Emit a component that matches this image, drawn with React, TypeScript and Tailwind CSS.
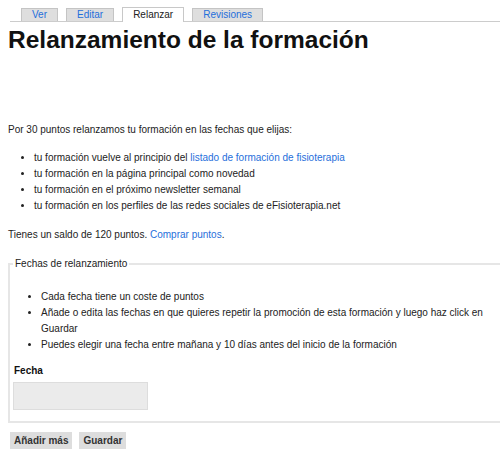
import React from "react";

const font = { fontFamily: '"Liberation Sans", Arial, sans-serif' };

function Tab({ label, active }: { label: string; active?: boolean }) {
  if (active) {
    return (
      <div className="h-[15px] mb-[-1px] bg-white border border-b-0 border-[#c8c8c8] px-[10px] text-[10px] leading-[14px] text-[#222]">
        {label}
      </div>
    );
  }
  return (
    <div className="h-[13px] bg-[#dedede] border border-b-0 border-[#c4c4c4] px-[10px] text-[10px] leading-[12px] text-[#1f6fdb]">
      {label}
    </div>
  );
}

export default function App() {
  return (
    <div className="w-[500px] h-[466px] overflow-hidden bg-white text-[#222]" style={font}>
      <div className="ml-[10px] h-[22px] border-b border-[#cccccc] flex items-end gap-[8px] pl-[11px]">
        <Tab label="Ver" />
        <Tab label="Editar" />
        <Tab label="Relanzar" active />
        <Tab label="Revisiones" />
      </div>
      <div className="pl-[8px]">
        <h1 className="mt-[4px] text-[24.5px] leading-[28px] font-bold text-[#111]">
          Relanzamiento de la formación
        </h1>
        <p className="mt-[68px] text-[10px] leading-[16px]">
          Por 30 puntos relanzamos tu formación en las fechas que elijas:
        </p>
        <ul className="mt-[12px] list-disc pl-[26px] text-[10px] leading-[16px]">
          <li>
            tu formación vuelve al principio del{" "}
            <a className="text-[#1f6fdb]">listado de formación de fisioterapia</a>
          </li>
          <li>tu formación en la página principal como novedad</li>
          <li>tu formación en el próximo newsletter semanal</li>
          <li>tu formación en los perfiles de las redes sociales de eFisioterapia.net</li>
        </ul>
        <p className="mt-[13px] text-[10px] leading-[16px]">
          Tienes un saldo de 120 puntos. <a className="text-[#1f6fdb]">Comprar puntos</a>.
        </p>
        <fieldset className="mt-[13px] border-2 border-r-0 border-[#e6e6e6] px-[3px] pb-[11px]">
          <legend className="px-[2px] text-[10px] leading-[16px]">Fechas de relanzamiento</legend>
          <ul className="mt-[17px] list-disc pl-[28px] pr-[4px] text-[10px] leading-[16px]">
            <li>Cada fecha tiene un coste de puntos</li>
            <li>
              Añade o edita las fechas en que quieres repetir la promoción de esta formación y luego haz click en
              Guardar
            </li>
            <li>Puedes elegir una fecha entre mañana y 10 días antes del inicio de la formación</li>
          </ul>
          <div className="mt-[10px] pl-[1px] text-[10px] leading-[16px] font-bold text-[#111]">Fecha</div>
          <div className="mt-[3px] w-[135px] h-[28px] bg-[#ebebeb] border border-[#dddddd]" />
        </fieldset>
        <div className="mt-[9px] ml-[2px] flex gap-[7px]">
          <button className="h-[17px] px-[4px] bg-[#dddddd] text-[10px] leading-[17px] font-bold text-[#333]">
            Añadir más
          </button>
          <button className="h-[17px] px-[4px] bg-[#dddddd] text-[10px] leading-[17px] font-bold text-[#333]">
            Guardar
          </button>
        </div>
      </div>
    </div>
  );
}
